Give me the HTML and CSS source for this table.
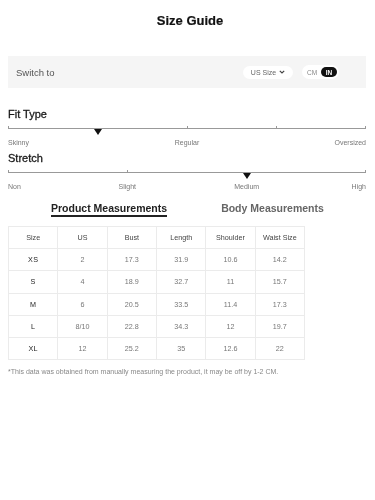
FILE: index.html
```html
<!DOCTYPE html>
<html>
<head>
<meta charset="utf-8">
<link rel="stylesheet" href="styles.css">
</head>
<body>
<div class="page">
  <h1 class="title">Size Guide</h1>

  <div class="switch-bar">
    <span class="switch-label">Switch to</span>
    <div class="switch-controls">
      <div class="size-select">US Size
        <svg class="chev" width="6" height="4" viewBox="0 0 6 4"><path d="M0.8 0.8 L3 3 L5.2 0.8" fill="none" stroke="#444" stroke-width="1.2"/></svg>
      </div>
      <div class="unit-toggle">
        <span class="unit">CM</span>
        <span class="unit unit-active">IN</span>
      </div>
    </div>
  </div>

  <h2 class="section-title fit-title">Fit Type</h2>
  <div class="scale">
    <div class="track">
      <span class="tick tick-start" style="left:0%"></span>
      <span class="tick" style="left:50%"></span>
      <span class="tick" style="left:75%"></span>
      <span class="tick tick-end" style="left:100%"></span>
      <span class="marker" style="left:25%"></span>
    </div>
    <div class="labels">
      <span class="lbl lbl-start" style="left:0%">Skinny</span>
      <span class="lbl" style="left:50%">Regular</span>
      <span class="lbl lbl-end" style="left:100%">Oversized</span>
    </div>
  </div>

  <h2 class="section-title stretch-title">Stretch</h2>
  <div class="scale">
    <div class="track">
      <span class="tick tick-start" style="left:0%"></span>
      <span class="tick" style="left:33.33%"></span>
      <span class="tick tick-end" style="left:100%"></span>
      <span class="marker" style="left:66.67%"></span>
    </div>
    <div class="labels">
      <span class="lbl lbl-start" style="left:0%">Non</span>
      <span class="lbl" style="left:33.33%">Slight</span>
      <span class="lbl" style="left:66.67%">Medium</span>
      <span class="lbl lbl-end" style="left:100%">High</span>
    </div>
  </div>

  <div class="tabs">
    <span class="tab tab-active">Product Measurements</span>
    <span class="tab">Body Measurements</span>
  </div>

  <table class="size-table">
    <thead>
      <tr><th>Size</th><th>US</th><th>Bust</th><th>Length</th><th>Shoulder</th><th>Waist Size</th></tr>
    </thead>
    <tbody>
      <tr><td class="sz">XS</td><td>2</td><td>17.3</td><td>31.9</td><td>10.6</td><td>14.2</td></tr>
      <tr><td class="sz">S</td><td>4</td><td>18.9</td><td>32.7</td><td>11</td><td>15.7</td></tr>
      <tr><td class="sz">M</td><td>6</td><td>20.5</td><td>33.5</td><td>11.4</td><td>17.3</td></tr>
      <tr><td class="sz">L</td><td>8/10</td><td>22.8</td><td>34.3</td><td>12</td><td>19.7</td></tr>
      <tr><td class="sz">XL</td><td>12</td><td>25.2</td><td>35</td><td>12.6</td><td>22</td></tr>
    </tbody>
  </table>

  <p class="note">*This data was obtained from manually measuring the product, it may be off by 1-2 CM.</p>
</div>
</body>
</html>
```

FILE: styles.css
```css
* { box-sizing: border-box; }
html, body { margin: 0; padding: 0; background: #fff; }
body {
  font-family: "Liberation Sans", Arial, sans-serif;
  color: #222;
  -webkit-font-smoothing: antialiased;
}

.page { padding: 0 9px 0 8px; will-change: transform; }

.title {
  margin: 13px 0 0;
  padding-left: 6px;
  font-size: 13px;
  line-height: 16px;
  font-weight: 700;
  text-align: center;
  color: #111;
  -webkit-text-stroke: 0.2px #111;
}

.switch-bar {
  margin-top: 27px;
  height: 32px;
  background: #f5f5f5;
  display: flex;
  align-items: center;
  justify-content: space-between;
  padding: 0 27px 0 8px;
}
.switch-label { font-size: 9.5px; color: #555; }
.switch-controls { display: flex; align-items: center; gap: 9px; }
.size-select {
  width: 50px; height: 13px;
  background: #fff;
  border-radius: 7px;
  font-size: 7px;
  color: #666;
  display: flex; align-items: center; justify-content: center; gap: 3px;
}
.chev { display: block; }
.unit-toggle {
  width: 37px; height: 14px;
  background: #fff;
  border-radius: 7px;
  display: flex; align-items: center;
  padding: 0 2px 0 5px;
  justify-content: space-between;
}
.unit { font-size: 6.5px; color: #888; }
.unit-active {
  background: #111; color: #fff; font-weight: 700;
  width: 16px; height: 10px; border-radius: 5px;
  display: flex; align-items: center; justify-content: center;
}

.section-title {
  margin: 0;
  font-size: 11px;
  line-height: 14px;
  font-weight: 400;
  color: #1a1a1a;
  -webkit-text-stroke: 0.3px #1a1a1a;
}
.fit-title { margin-top: 19px; }
.stretch-title { margin-top: 3px; }

.scale { margin-top: 7px; }
.track {
  position: relative;
  height: 1px;
  background: #999;
}
.tick {
  position: absolute; top: -2px;
  width: 1px; height: 3px; background: #999;
  margin-left: -0.5px;
}
.tick-start { margin-left: 0; }
.tick-end { margin-left: -1px; }
.marker {
  position: absolute; top: 1px;
  width: 0; height: 0;
  margin-left: -4px;
  border-left: 4px solid transparent;
  border-right: 4px solid transparent;
  border-top: 6px solid #111;
}
.labels { position: relative; height: 10px; margin-top: 9px; }
.lbl {
  position: absolute; top: 0;
  font-size: 7px; line-height: 10px; color: #777;
  white-space: nowrap;
  transform: translateX(-50%);
}
.lbl-start { transform: none; }
.lbl-end { transform: translateX(-100%); }

.tabs {
  margin-top: 9px;
  display: flex;
  padding-left: 43px;
  gap: 54px;
}
.tab {
  font-size: 10.5px; line-height: 14px; font-weight: 700;
  color: #666;
}
.tab-active {
  color: #222;
  border-bottom: 2px solid #222;
}

.size-table {
  margin-top: 9px;
  border-collapse: collapse;
  width: 297px;
  table-layout: fixed;
}
.size-table th, .size-table td {
  border: 1px solid #ebebeb;
  height: 22.3px;
  padding: 0;
  text-align: center;
  font-size: 7.2px;
  font-weight: 400;
  color: #777;
}
.size-table th { color: #444; height: 22px; }
.size-table td.sz { color: #222; letter-spacing: 0.3px; }

.note {
  margin: 7px 0 0;
  font-size: 7px; line-height: 10px;
  color: #888;
}
```
